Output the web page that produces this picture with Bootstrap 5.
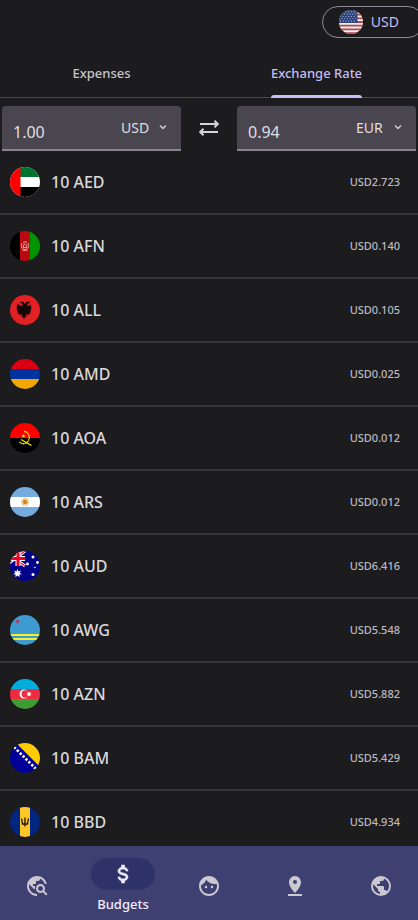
<!DOCTYPE html>
<html lang="en">
<head>
<meta charset="utf-8">
<meta name="viewport" content="width=device-width, initial-scale=1">
<title>Exchange Rate</title>
<link href="https://cdn.jsdelivr.net/npm/bootstrap@5.3.0/dist/css/bootstrap.min.css" rel="stylesheet">
<style>
body { background: #1c1b1d; color: #e0dde1; font-family: "Noto Sans", sans-serif; font-size: 16px; line-height: 24px; }
/* content runs slightly past both window edges */
.bleed { margin-left: -6px; margin-right: -6px; }
svg { display: block; flex: none; }
.top-area { height: 50px; padding: 6px 0; }
.currency-pill { height: 32px; padding: 0 24px 0 16px; border: 1px solid #8f8b96; color: #c5bdf6; font-size: 14px; line-height: 20px; background: transparent; }
.flag { border-radius: 50%; width: 30px; height: 30px; }
.flag-sm { width: 24px; height: 24px; }
.tabs { border-bottom: 1px solid #49474d; }
.tab-btn { height: 47px; border: 0; background: transparent; color: #cac5cd; font-size: 13px; font-weight: 500; line-height: 20px; padding: 0; }
.tab-btn span { display: flex; flex-direction: column; height: 48px; padding-top: 13px; justify-content: space-between; }
.tab-btn.active { color: #c5bdf6; }
.tab-btn.active span::after { content: ""; height: 3px; background: #c5bff8; border-radius: 3px 3px 0 0; }
.converter { padding: 8px 8px 0; }
.money-field { height: 45px; background: #49464f; border-bottom: 2px solid #89858f; border-radius: 4px 4px 0 0; padding: 0 14px 0 11px; min-width: 0; }
.money-field input { background: transparent; border: 0; outline: 0; color: #e0dde1; min-width: 0; width: 60px; padding: 10px 0 0; height: 43px; }
.money-field select { appearance: none; background: transparent; border: 0; outline: 0; color: #e0dde1; font-size: 14px; line-height: 20px; width: 38px; padding: 2px 0 0; }
.swap-btn { width: 56px; border: 0; background: transparent; color: #d6d3d8; padding: 0; }
.rate-row { height: 64px; padding: 0 24px 0 16px; border-bottom: 2px solid #363538; gap: 11px; }
.rate-name { font-weight: 500; color: #dbd8dc; }
.rate-value { color: #bdb9c0; font-size: 11px; line-height: 16px; font-weight: 500; }
.rates { scrollbar-width: none; min-height: 0; }
.bottom-bar { background: #3f4072; height: 74px; }
.bar-link { color: #ccc8d2; text-decoration: none; font-size: 13px; font-weight: 500; line-height: 16px; padding-top: 6px; flex: 1 1 0; }
.bar-link.active { color: #f0ecff; padding-top: 4px; }
.bar-pill { width: 64px; height: 32px; border-radius: 16px; }
.bar-link.active .bar-pill { background: #2f3268; margin-bottom: 6px; }
</style>
</head>
<body class="overflow-hidden">
<div class="vh-100 overflow-hidden">
<div class="bleed h-100 d-flex flex-column">
  <header class="top-area d-flex justify-content-end">
    <button type="button" class="currency-pill rounded-pill d-flex align-items-center gap-2">
      <svg class="flag flag-sm" viewBox="0 0 26 26" aria-hidden="true"><path fill="#f4eeee" d="M0 0h26v26H0z"/><path stroke="#b4454c" stroke-width="2" d="M0 1h26M0 5h26M0 9h26M0 13h26M0 17h26M0 21h26M0 25h26"/><path fill="#29417c" d="M0 0h20v14H0z"/><path stroke="#9dabc8" stroke-width="1.2" stroke-dasharray="1.2 1.8" d="M1 2h18M2.500 4.500h17M1 7h18M2.500 9.500h17M1 12h18"/></svg>
      <span>USD</span>
    </button>
  </header>
  <nav class="tabs d-flex" role="tablist" aria-label="Budget sections">
    <button type="button" role="tab" class="tab-btn w-50 d-flex justify-content-center"><span>Expenses</span></button>
    <button type="button" role="tab" aria-selected="true" class="tab-btn active w-50 d-flex justify-content-center"><span>Exchange Rate</span></button>
  </nav>
  <form class="converter d-flex">
    <div class="money-field flex-fill d-flex align-items-center justify-content-between">
      <input type="text" value="1.00" aria-label="Amount to convert">
      <div class="d-flex align-items-center">
        <select aria-label="From currency"><option>USD</option><option>EUR</option></select>
        <svg width="8" height="8" viewBox="0 0 8 8" fill="none" stroke="#d0cdd3" stroke-width="1.500" aria-hidden="true"><path d="m1 2.500 3 3 3-3"/></svg>
      </div>
    </div>
    <button type="button" class="swap-btn d-flex align-items-center justify-content-center" aria-label="Swap currencies">
      <svg width="24" height="24" viewBox="0 0 24 24" fill="none" stroke="currentColor" stroke-width="2" aria-hidden="true"><path d="M3 8h17.500M17.500 4.700 20.800 8l-3.300 3.300M21 16H3.500M6.500 12.700 3.200 16l3.300 3.300"/></svg>
    </button>
    <div class="money-field flex-fill d-flex align-items-center justify-content-between">
      <input type="text" value="0.94" aria-label="Converted amount">
      <div class="d-flex align-items-center">
        <select aria-label="To currency"><option>EUR</option><option>USD</option></select>
        <svg width="8" height="8" viewBox="0 0 8 8" fill="none" stroke="#d0cdd3" stroke-width="1.500" aria-hidden="true"><path d="m1 2.500 3 3 3-3"/></svg>
      </div>
    </div>
  </form>
  <main class="rates flex-fill overflow-auto">
    <ul class="list-unstyled mb-0">
      <li class="rate-row d-flex align-items-center">
        <svg class="flag" viewBox="0 0 30 30" aria-hidden="true"><path fill="#fff" d="M0 0h30v30H0z"/><path fill="#00732f" d="M10 0h20v10H10z"/><path d="M10 20h20v10H10z"/><path fill="#f00" d="M0 0h10.500v30H0z"/></svg>
        <span class="rate-name flex-fill">10 AED</span><span class="rate-value">USD2.723</span>
      </li>
      <li class="rate-row d-flex align-items-center">
        <svg class="flag" viewBox="0 0 30 30" aria-hidden="true"><path d="M0 0h10v30H0z"/><path fill="#b80a10" d="M10 0h10v30H10z"/><path fill="#009500" d="M20 0h10v30H20z"/><g fill="none" stroke="#efb5b0" stroke-width=".9"><path d="M12 12c-1.500 3-.6 6 3 6.500 3.600-.5 4.500-3.500 3-6.500M13 11.500q2-1.500 4 0M12.800 16.500h4.400M13.300 16v-2q1.700-2 3.400 0v2M12.500 19.300h5"/></g></svg>
        <span class="rate-name flex-fill">10 AFN</span><span class="rate-value">USD0.140</span>
      </li>
      <li class="rate-row d-flex align-items-center">
        <svg class="flag" viewBox="0 0 30 30" aria-hidden="true"><path fill="#e32024" d="M0 0h30v30H0z"/><path fill="#180707" d="m15 9-1.500-2-2.500-.5-1 1.500 2 .3 1 2.200-2 .5L7 8.500l1 2.500-1.500-.3.700 2-1 .3 1.300 1.300-1 .7 1.500 1-1.300 1.200 2 .3-1.200 2 2.200-.7-.5 1.700 2.300-1.500.5 2-1 .5 2 .5 1 2.500 1-2.500 2-.5-1-.5.500-2 2.300 1.500-.5-1.700 2.200.7-1.200-2 2-.3-1.300-1.200 1.500-1-1-.7 1.300-1.300-1-.3.700-2-1.500.3 1-2.500L19 11l-2-.5 1-2.200 2-.3-1-1.500-2.500.5z"/></svg>
        <span class="rate-name flex-fill">10 ALL</span><span class="rate-value">USD0.105</span>
      </li>
      <li class="rate-row d-flex align-items-center">
        <svg class="flag" viewBox="0 0 30 30" aria-hidden="true"><path fill="#d90012" d="M0 0h30v10H0z"/><path fill="#0033a0" d="M0 10h30v10H0z"/><path fill="#f2a800" d="M0 20h30v10H0z"/></svg>
        <span class="rate-name flex-fill">10 AMD</span><span class="rate-value">USD0.025</span>
      </li>
      <li class="rate-row d-flex align-items-center">
        <svg class="flag" viewBox="0 0 30 30" aria-hidden="true"><path fill="#f00" d="M0 0h30v15H0z"/><path d="M0 15h30v15H0z"/><g fill="none" stroke="#ffec00"><path stroke-width="1.500" stroke-dasharray="1.600 .5" d="M14 8.500c6 0 7.500 9.500 1 12-2.200.7-4.200-.2-5.500-1.500"/><path stroke-width="1.300" d="m11 16.500 10.500 6"/></g><path fill="#ffec00" d="m13.500 10.800.5 1.500h1.600l-1.200 1 .4 1.500-1.300-.9-1.300.9.400-1.500-1.200-1H13z"/></svg>
        <span class="rate-name flex-fill">10 AOA</span><span class="rate-value">USD0.012</span>
      </li>
      <li class="rate-row d-flex align-items-center">
        <svg class="flag" viewBox="0 0 30 30" aria-hidden="true"><path fill="#74acdf" d="M0 0h30v30H0z"/><path fill="#fff" d="M0 10h30v10H0z"/><circle cx="15" cy="15" r="3.200" fill="none" stroke="#e8b564" stroke-width="1.600" stroke-dasharray="1 .4"/><circle cx="15" cy="15" r="2.200" fill="#c98328"/></svg>
        <span class="rate-name flex-fill">10 ARS</span><span class="rate-value">USD0.012</span>
      </li>
      <li class="rate-row d-flex align-items-center">
        <svg class="flag" viewBox="0 0 30 30" aria-hidden="true"><path fill="#00008b" d="M0 0h30v30H0z"/><path stroke="#fff" stroke-width="3" d="m-5 0 20 15M15 0-5 15"/><path stroke="#e8112d" stroke-width="1.200" d="m-5 0 20 15M15 0-5 15"/><path stroke="#fff" stroke-width="5" d="M8 0v15M0 7.500h15"/><path stroke="#f00020" stroke-width="3" d="M8 0v15M0 7.500h15"/><g fill="#fff"><path d="m7.500 18 1 2.500 2.500-.9-1.300 2.300 2.300 1.300-2.600.4.200 2.700L7.500 24.500l-2.100 1.800.2-2.700-2.600-.4 2.300-1.300L4 19.600l2.500.9z"/><circle cx="23" cy="6" r="1.500"/><circle cx="17.500" cy="13" r="1.400"/><circle cx="27.500" cy="11.500" r="1.400"/><circle cx="23" cy="23.500" r="1.500"/><circle cx="25" cy="16.500" r=".8"/></g></svg>
        <span class="rate-name flex-fill">10 AUD</span><span class="rate-value">USD6.416</span>
      </li>
      <li class="rate-row d-flex align-items-center">
        <svg class="flag" viewBox="0 0 30 30" aria-hidden="true"><path fill="#3d9bd1" d="M0 0h30v30H0z"/><path stroke="#f5f02c" stroke-width="2" d="M0 20h30M0 24h30"/><path fill="#d52038" stroke="#d9b2c6" stroke-width=".2" d="m7.500 3 .9 2.600 2.600.9-2.600.9L7.500 10l-.9-2.600L4 6.500l2.600-.9z"/></svg>
        <span class="rate-name flex-fill">10 AWG</span><span class="rate-value">USD5.548</span>
      </li>
      <li class="rate-row d-flex align-items-center">
        <svg class="flag" viewBox="0 0 30 30" aria-hidden="true"><path fill="#00aede" d="M0 0h30v10H0z"/><path fill="#ef2b40" d="M0 10h30v10H0z"/><path fill="#3f9c35" d="M0 20h30v10H0z"/><circle cx="14" cy="15" r="4.500" fill="#fff"/><circle cx="15.300" cy="15" r="3.700" fill="#ef2b40"/><path fill="#fff" d="m19 12.500.6 1.200 1.300-.4-.5 1.200 1.100.5-1.100.6.5 1.200-1.300-.4-.6 1.200-.6-1.200-1.300.4.500-1.200-1.100-.6 1.100-.5-.5-1.200 1.300.4z"/></svg>
        <span class="rate-name flex-fill">10 AZN</span><span class="rate-value">USD5.882</span>
      </li>
      <li class="rate-row d-flex align-items-center">
        <svg class="flag" viewBox="0 0 30 30" aria-hidden="true"><path fill="#000099" d="M0 0h30v30H0z"/><path fill="#fc0" d="M6 0h24v24z"/><path stroke="#fff" stroke-width="2.600" stroke-dasharray="2.400 1.700" d="m4 4 23 23"/></svg>
        <span class="rate-name flex-fill">10 BAM</span><span class="rate-value">USD5.429</span>
      </li>
      <li class="rate-row d-flex align-items-center">
        <svg class="flag" viewBox="0 0 30 30" aria-hidden="true"><path fill="#00267f" d="M0 0h30v30H0z"/><path fill="#ffc726" d="M10 0h10v30H10z"/><path fill="none" stroke="#1a1204" stroke-width="1.300" d="M15 10.500v9M11.300 11.500c1 1.500.7 3 1.200 5.500H15M18.700 11.500c-1 1.500-.7 3-1.200 5.500H15"/></svg>
        <span class="rate-name flex-fill">10 BBD</span><span class="rate-value">USD4.934</span>
      </li>
    </ul>
  </main>
  <nav class="bottom-bar d-flex flex-shrink-0" aria-label="Main">
    <a href="#" class="bar-link d-flex flex-column align-items-center justify-content-center" aria-label="Explore"><span class="bar-pill d-flex align-items-center justify-content-center"><svg width="24" height="24" viewBox="0 0 24 24" fill="currentColor"><path d="M19.300 16.900c.4-.7.700-1.500.7-2.400 0-2.500-2-4.500-4.500-4.500S11 12 11 14.500s2 4.500 4.500 4.500c.9 0 1.700-.3 2.400-.7l3.200 3.200 1.400-1.400-3.200-3.200zm-3.800.1c-1.400 0-2.500-1.100-2.500-2.500s1.100-2.500 2.500-2.500 2.500 1.100 2.500 2.500-1.100 2.500-2.500 2.500zM12 20v2C6.480 22 2 17.520 2 12S6.480 2 12 2c4.840 0 8.870 3.440 9.800 8h-2.070c-.64-2.460-2.400-4.470-4.730-5.410V5c0 1.100-.9 2-2 2h-2v2c0 .55-.45 1-1 1H8v2h2v3H9l-4.790-4.790C4.080 10.790 4 11.380 4 12c0 4.410 3.590 8 8 8z"/></svg></span></a>
    <a href="#" class="bar-link active d-flex flex-column align-items-center justify-content-center" aria-current="page"><span class="bar-pill d-flex align-items-center justify-content-center"><svg width="24" height="24" viewBox="0 0 24 24" fill="currentColor" stroke="currentColor" stroke-width=".6" aria-hidden="true"><path d="M7 15h2c0 1.080 1.370 2 3 2s3-.92 3-2c0-1.100-1.040-1.500-3.240-2.030C9.640 12.440 7 11.780 7 9c0-1.790 1.470-3.310 3.500-3.820V3h3v2.180C15.530 5.690 17 7.210 17 9h-2c0-1.080-1.370-2-3-2s-3 .92-3 2c0 1.100 1.040 1.500 3.240 2.030C14.360 11.560 17 12.220 17 15c0 1.790-1.470 3.310-3.500 3.820V21h-3v-2.180C8.470 18.310 7 16.790 7 15z"/></svg></span><span>Budgets</span></a>
    <a href="#" class="bar-link d-flex flex-column align-items-center justify-content-center" aria-label="Profile"><span class="bar-pill d-flex align-items-center justify-content-center"><svg width="24" height="24" viewBox="0 0 24 24" fill="currentColor"><path d="M9 11.750a1.250 1.250 0 1 0 0 2.500 1.250 1.250 0 0 0 0-2.500zm6 0a1.250 1.250 0 1 0 0 2.500 1.250 1.250 0 0 0 0-2.500zM12 2C6.480 2 2 6.480 2 12s4.480 10 10 10 10-4.480 10-10S17.520 2 12 2zm0 18c-4.410 0-8-3.590-8-8 0-.29.020-.58.050-.86 2.360-1.050 4.230-2.980 5.210-5.370C11.070 8.330 14.050 10 17.420 10c.78 0 1.530-.09 2.250-.26.21.71.33 1.470.33 2.260 0 4.410-3.590 8-8 8z"/></svg></span></a>
    <a href="#" class="bar-link d-flex flex-column align-items-center justify-content-center" aria-label="Places"><span class="bar-pill d-flex align-items-center justify-content-center"><svg width="24" height="24" viewBox="0 0 24 24" fill="currentColor"><path d="M18 8.500C18 4.900 15.300 2 12 2S6 4.900 6 8.500C6 13 12 19 12 19s6-6 6-10.500zM10 8a2 2 0 1 1 4 0 2 2 0 0 1-4 0zM5 20v2h14v-2H5z"/></svg></span></a>
    <a href="#" class="bar-link d-flex flex-column align-items-center justify-content-center" aria-label="World"><span class="bar-pill d-flex align-items-center justify-content-center"><svg width="24" height="24" viewBox="0 0 24 24" fill="currentColor"><path d="M17.900 17.390C17.640 16.590 16.890 16 16 16h-1v-3a1 1 0 0 0-1-1H8v-2h2a1 1 0 0 0 1-1V7h2a2 2 0 0 0 2-2v-.41C17.930 5.770 20 8.640 20 12c0 2.080-.8 3.970-2.100 5.390M11 19.930C7.050 19.440 4 16.080 4 12c0-.62.080-1.220.21-1.790L9 15v1a2 2 0 0 0 2 2M12 2a10 10 0 1 0 0 20 10 10 0 0 0 0-20z"/></svg></span></a>
  </nav>
</div>
</div>
<script src="https://cdn.jsdelivr.net/npm/bootstrap@5.3.0/dist/js/bootstrap.bundle.min.js"></script>
</body>
</html>
